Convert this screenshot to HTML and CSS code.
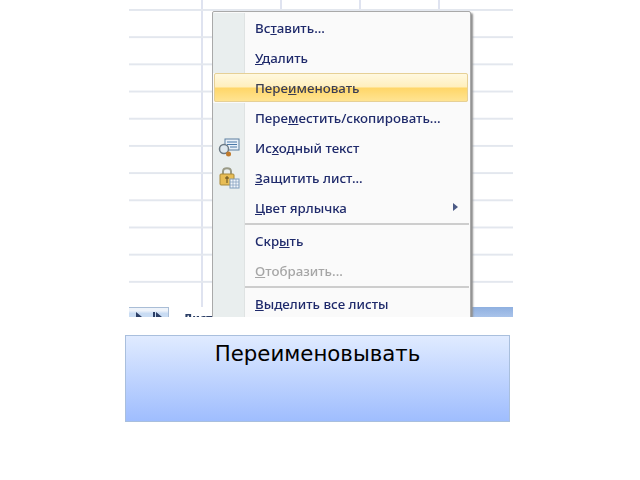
FILE: index.html
```html
<!DOCTYPE html>
<html lang="en">
<head>
  <meta charset="UTF-8" />
  <title>Переименовывать</title>
  <link rel="stylesheet" href="styles.css">
</head>
<body>
  <div class="sheet">
    <div class="grid"></div>
    <div class="tabs">
      <div class="nav">
        <svg width="40" height="9" viewBox="0 0 40 9">
          <path d="M7 9V4L13 9Z" fill="#2c3f66"/>
          <path d="M24 9V4H26V9ZM27 9V4L33 9Z" fill="#2c3f66"/>
        </svg>
      </div>
      <div class="tab-name">Лист1</div>
      <div class="tab-fill"></div>
    </div>

    <div class="menu">
      <div class="item"><span class="gutter"></span><span class="label">Вс<u>т</u>авить...</span></div>
      <div class="item"><span class="gutter"></span><span class="label"><u>У</u>далить</span></div>
      <div class="item active"><span class="gutter"></span><span class="label">Пере<u>и</u>меновать</span></div>
      <div class="item"><span class="gutter"></span><span class="label">Пере<u>м</u>естить/скопировать...</span></div>
      <div class="item">
        <span class="gutter">
          <svg width="22" height="22" viewBox="0 0 22 22">
            <rect x="7" y="2" width="14" height="11" fill="#eaf1f8" stroke="#5d7f9f"/>
            <path d="M9 5H19M9 7.500H19M12 10H19" stroke="#4b79a8"/>
            <circle cx="6" cy="12" r="4.500" fill="#dfe8ee" stroke="#6d7a84" stroke-width="1.500"/>
            <circle cx="10.500" cy="17" r="2.500" fill="#c07a2c"/>
          </svg>
        </span>
        <span class="label">Ис<u>х</u>одный текст</span>
      </div>
      <div class="item">
        <span class="gutter">
          <svg width="22" height="24" viewBox="0 0 22 24">
            <path d="M5 9V5.500C5 1 13 1 13 5.500V9" fill="none" stroke="#9a9a86" stroke-width="2"/>
            <rect x="2" y="8" width="14" height="11" rx="1" fill="#e8bd55" stroke="#a88a3c"/>
            <path d="M9 10V17M7 12H11" stroke="#5f4a1c"/>
            <rect x="12" y="13" width="9" height="9" fill="#f2f6fb" stroke="#7f9cbc"/>
            <path d="M12 16H21M12 19H21M15 13V22M18 13V22" stroke="#7f9cbc" stroke-width=".7"/>
          </svg>
        </span>
        <span class="label"><u>З</u>ащитить лист...</span>
      </div>
      <div class="item"><span class="gutter"></span><span class="label"><u>Ц</u>вет ярлычка</span><span class="arrow"></span></div>
      <div class="sep"><span class="gutter"></span><span class="line"></span></div>
      <div class="item"><span class="gutter"></span><span class="label">Скр<u>ы</u>ть</span></div>
      <div class="item disabled"><span class="gutter"></span><span class="label"><u>О</u>тобразить...</span></div>
      <div class="sep"><span class="gutter"></span><span class="line"></span></div>
      <div class="item"><span class="gutter"></span><span class="label"><u>В</u>ыделить все листы</span></div>
    </div>
  </div>

  <div class="caption">Переименовывать</div>
</body>
</html>
```

FILE: styles.css
```css
body {
  margin: 0;
  background: #fff;
  font-family: 'DejaVu Sans', sans-serif;
}

.sheet {
  position: relative;
  width: 384px;
  height: 317px;
  margin-left: 129px;
  overflow: hidden;
  display: flex;
  flex-direction: column;
}

.grid {
  flex: 1;
  background-color: #fff;
  background-image:
    linear-gradient(#e3e7ee 2px, transparent 2px),
    linear-gradient(90deg, #dfe3f0 2px, transparent 2px);
  background-size: 100% 27.2px, 79px 100%;
  background-position: 0 9px, 72px 0;
}

.tabs {
  height: 10px;
  display: flex;
  font-size: 11px;
}

.nav {
  width: 40px;
  background: linear-gradient(#eef3fa 30%, #c9dcf3 60%);
  border-top: 1px solid #a9bdd6;
  border-right: 1px solid #a9bdd6;
  box-sizing: border-box;
}

.nav svg {
  display: block;
}

.tab-name {
  width: 303px;
  padding-left: 14px;
  padding-top: 5px;
  box-sizing: border-box;
  font-weight: bold;
  color: #2c3f66;
  line-height: 14px;
  background: #fff;
  filter: blur(0.4px);
}

.tab-fill {
  flex: 1;
  background: linear-gradient(#8fb0e0, #a9c3ea);
}

.menu {
  position: absolute;
  left: 83px;
  top: 11px;
  width: 259px;
  background: #fafafa;
  border: 1px solid #a9a9a9;
  border-radius: 2px;
  box-shadow: 2px 2px 2px #8f8f8f;
  padding-top: 1px;
  box-sizing: border-box;
  height: 320px;
}

.item {
  height: 30px;
  display: flex;
  align-items: center;
  position: relative;
  font-family: 'Noto Sans', sans-serif;
  font-size: 13.300px;
  font-weight: 500;
  color: #1f2a6b;
}

.gutter {
  width: 31px;
  height: 100%;
  flex: none;
  background: #e9eeee;
  border-right: 1px solid #dfe3e3;
  display: flex;
  align-items: center;
  justify-content: center;
}

.label {
  margin-left: 10px;
  filter: blur(0.45px);
}

.item.active {
  background: linear-gradient(#fff9e2 0%, #ffefbd 48%, #ffd668 52%, #ffe596 100%);
  outline: 1px solid #e6d096;
  outline-offset: -1px;
  margin: 0 2px 0 1px;
  border-radius: 2px;
  height: 29px;
  margin-bottom: 1px;
  color: #3a3d55;
}

.item.active .gutter {
  background: none;
  border-right: none;
  width: 31px;
}

.item.disabled {
  color: #a6a6a6;
}

.arrow {
  position: absolute;
  right: 12px;
  top: 10px;
  border-left: 5px solid #4b5a85;
  border-top: 4px solid transparent;
  border-bottom: 4px solid transparent;
}

.sep {
  height: 3px;
  display: flex;
}

.sep .gutter {
  height: 3px;
}

.line {
  flex: 1;
  height: 2px;
  margin-right: 1px;
  background: #cdcdcd;
}

.caption {
  width: 385px;
  height: 87px;
  margin: 18px 0 0 125px;
  box-sizing: border-box;
  border: 1px solid #a9bfdd;
  background: linear-gradient(#e0ebff, #9fbdfe);
  color: #000;
  font-size: 21.300px;
  text-align: center;
  padding-top: 5px;
}
```
